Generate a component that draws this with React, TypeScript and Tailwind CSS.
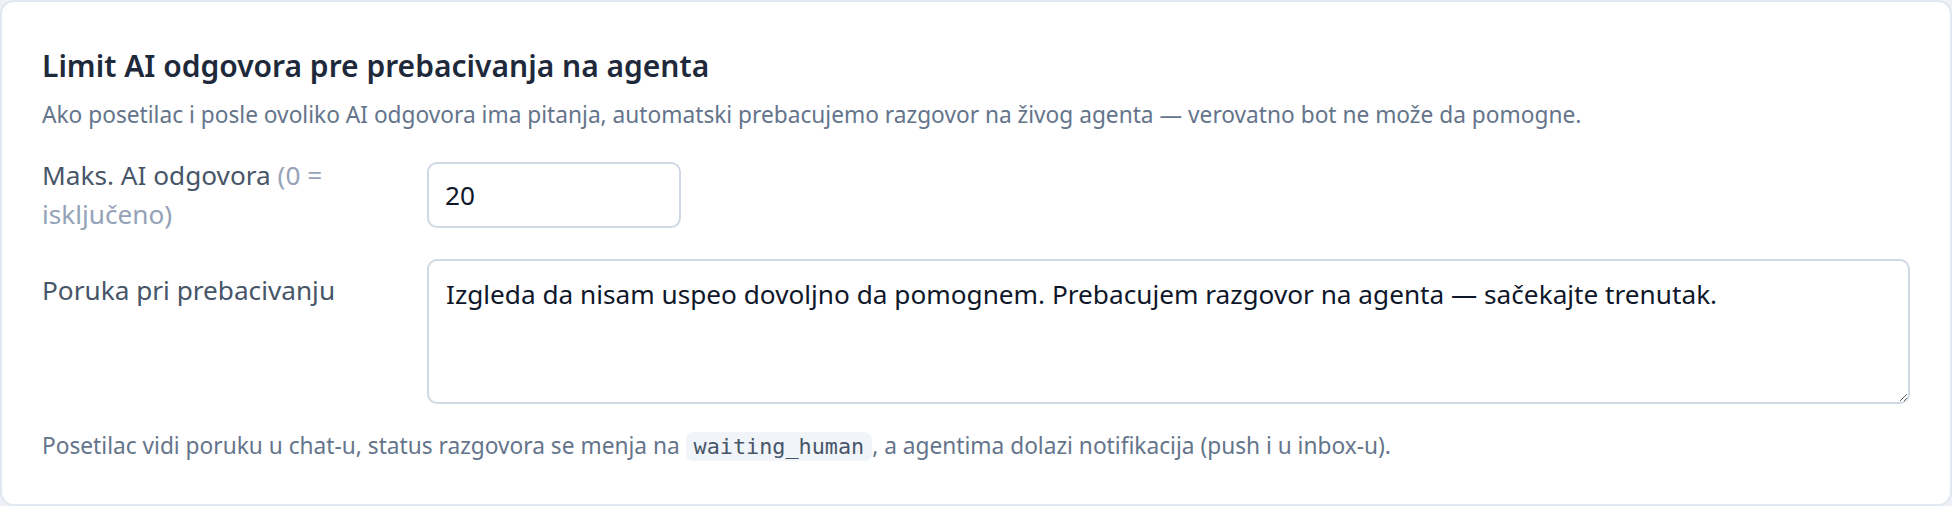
const sans = { fontFamily: '"Noto Sans", "Open Sans", sans-serif' };

export default function App() {
  return (
    <div className="min-h-screen bg-[#eef1f6]" style={sans}>
      <section className="h-[506px] rounded-[14px] border-2 border-[#e2e8f0] bg-white px-[40px] pt-[44px]">
        <h2 className="text-[30px] font-semibold leading-[40px] text-[#1e293b]">
          Limit AI odgovora pre prebacivanja na agenta
        </h2>
        <p className="mt-[12px] text-[22.7px] leading-[34px] text-[#64748b]">
          Ako posetilac i posle ovoliko AI odgovora ima pitanja, automatski prebacujemo razgovor na živog agenta — verovatno bot ne može da pomogne.
        </p>

        {/* max AI replies */}
        <div className="mt-[24px] flex items-center gap-[24px]">
          <label
            htmlFor="max-ai"
            className="w-[361px] shrink-0 text-[26.2px] leading-[38.5px] text-[#475569]"
          >
            Maks. AI odgovora <span className="text-[#94a3b8]">(0 = isključeno)</span>
          </label>
          <input
            id="max-ai"
            type="number"
            defaultValue={20}
            className="h-[66px] w-[254px] rounded-[10px] border-2 border-[#cfd8e3] bg-white px-[16px] text-[26.2px] text-[#0f172a] outline-none [appearance:textfield]"
            style={sans}
          />
        </div>

        {/* handoff message */}
        <div className="mt-[26px] flex items-start gap-[24px]">
          <label
            htmlFor="handoff-msg"
            className="w-[361px] shrink-0 pt-[12px] text-[26.2px] leading-[38.5px] text-[#475569]"
          >
            Poruka pri prebacivanju
          </label>
          <textarea
            id="handoff-msg"
            defaultValue="Izgleda da nisam uspeo dovoljno da pomognem. Prebacujem razgovor na agenta — sačekajte trenutak."
            className="block h-[145px] flex-1 rounded-[10px] border-2 border-[#cfd8e3] bg-white px-[17px] pt-[14px] text-[26.2px] leading-[38.5px] text-[#0f172a] outline-none"
            style={sans}
          />
        </div>

        <p className="mt-[25px] text-[22.7px] leading-[34px] text-[#64748b]">
          Posetilac vidi poruku u chat-u, status razgovora se menja na{" "}
          <code
            className="rounded-[7px] bg-[#f1f5f9] px-[8px] py-[2px] text-[21.8px] text-[#475569]"
            style={{ fontFamily: '"DejaVu Sans Mono", "Liberation Mono", monospace' }}
          >
            waiting_human
          </code>
          , a agentima dolazi notifikacija (push i u inbox-u).
        </p>
      </section>
    </div>
  );
}
